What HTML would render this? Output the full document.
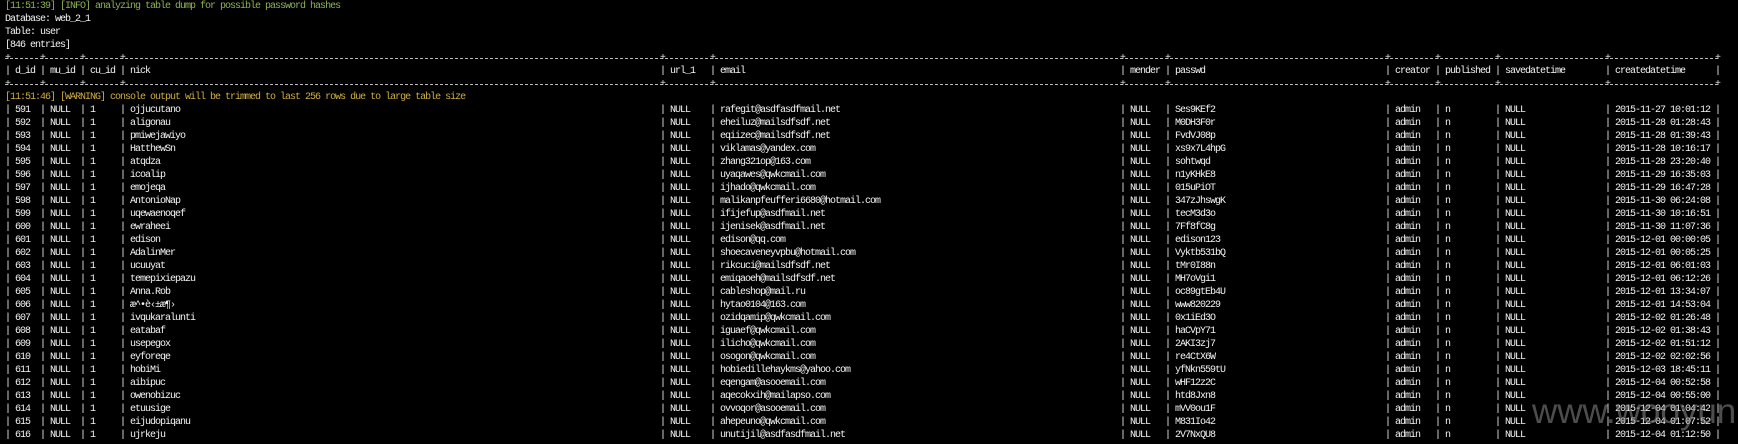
<!DOCTYPE html>
<html><head><meta charset="utf-8">
<style>
html,body{margin:0;padding:0;background:#000;}
body{width:1738px;height:444px;position:relative;overflow:hidden;font-family:"Liberation Mono","DejaVu Sans Mono",monospace;font-size:10px;letter-spacing:-1px;color:#f4f4f4;}
.l{position:absolute;left:0;height:13px;line-height:13px;width:1738px;white-space:pre;}
.l span{position:absolute;top:0;}
.g{color:#8cb352;}
.y{color:#cfae3e;}
.b{position:absolute;left:5px;width:1713px;top:6px;height:1px;background:repeating-linear-gradient(90deg,#bbb 0 3px,transparent 3px 5px);}
.p{position:absolute;top:0;color:#ddd;}
.a{left:5px}.b1{left:40px}.c{left:80px}.d{left:120px}.e{left:660px}.f{left:710px}.h{left:1120px}.i{left:1165px}.j{left:1385px}.k{left:1435px}.m{left:1495px}.n{left:1605px}.o{left:1715px}
.wm{position:absolute;left:1532px;top:392px;font-family:"Liberation Sans",sans-serif;font-size:35px;letter-spacing:0;color:rgba(140,140,140,0.55);white-space:nowrap;}
</style></head><body>
<div class="l g" style="top:0px"><span class="a">[11:51:39] [INFO] analyzing table dump for possible password hashes</span></div>
<div class="l" style="top:13px"><span class="a">Database: web_2_1</span></div>
<div class="l" style="top:26px"><span class="a">Table: user</span></div>
<div class="l" style="top:39px"><span class="a">[846 entries]</span></div>
<div class="l" style="top:52px"><div class="b"></div><span class="p a">+</span><span class="p b1">+</span><span class="p c">+</span><span class="p d">+</span><span class="p e">+</span><span class="p f">+</span><span class="p h">+</span><span class="p i">+</span><span class="p j">+</span><span class="p k">+</span><span class="p m">+</span><span class="p n">+</span><span class="p o">+</span></div>
<div class="l" style="top:65px"><span class="a">| d_id</span><span class="b1">| mu_id</span><span class="c">| cu_id</span><span class="d">| nick</span><span class="e">| url_1</span><span class="f">| email</span><span class="h">| mender</span><span class="i">| passwd</span><span class="j">| creator</span><span class="k">| published</span><span class="m">| savedatetime</span><span class="n">| createdatetime</span><span class="o">|</span></div>
<div class="l" style="top:78px"><div class="b"></div><span class="p a">+</span><span class="p b1">+</span><span class="p c">+</span><span class="p d">+</span><span class="p e">+</span><span class="p f">+</span><span class="p h">+</span><span class="p i">+</span><span class="p j">+</span><span class="p k">+</span><span class="p m">+</span><span class="p n">+</span><span class="p o">+</span></div>
<div class="l y" style="top:91px"><span class="a">[11:51:46] [WARNING] console output will be trimmed to last 256 rows due to large table size</span></div>

<div class="l" style="top:104px"><span class="a">| 591</span><span class="b1">| NULL</span><span class="c">| 1</span><span class="d">| ojjucutano</span><span class="e">| NULL</span><span class="f">| rafegit@asdfasdfmail.net</span><span class="h">| NULL</span><span class="i">| Ses9KEf2</span><span class="j">| admin</span><span class="k">| n</span><span class="m">| NULL</span><span class="n">| 2015-11-27 10:01:12</span><span class="o">|</span></div>
<div class="l" style="top:117px"><span class="a">| 592</span><span class="b1">| NULL</span><span class="c">| 1</span><span class="d">| aligonau</span><span class="e">| NULL</span><span class="f">| eheiluz@mailsdfsdf.net</span><span class="h">| NULL</span><span class="i">| M0DH3F0r</span><span class="j">| admin</span><span class="k">| n</span><span class="m">| NULL</span><span class="n">| 2015-11-28 01:28:43</span><span class="o">|</span></div>
<div class="l" style="top:130px"><span class="a">| 593</span><span class="b1">| NULL</span><span class="c">| 1</span><span class="d">| pmiwejawiyo</span><span class="e">| NULL</span><span class="f">| eqiizec@mailsdfsdf.net</span><span class="h">| NULL</span><span class="i">| FvdVJ08p</span><span class="j">| admin</span><span class="k">| n</span><span class="m">| NULL</span><span class="n">| 2015-11-28 01:39:43</span><span class="o">|</span></div>
<div class="l" style="top:143px"><span class="a">| 594</span><span class="b1">| NULL</span><span class="c">| 1</span><span class="d">| HatthewSn</span><span class="e">| NULL</span><span class="f">| viklamas@yandex.com</span><span class="h">| NULL</span><span class="i">| xs9x7L4hpG</span><span class="j">| admin</span><span class="k">| n</span><span class="m">| NULL</span><span class="n">| 2015-11-28 10:16:17</span><span class="o">|</span></div>
<div class="l" style="top:156px"><span class="a">| 595</span><span class="b1">| NULL</span><span class="c">| 1</span><span class="d">| atqdza</span><span class="e">| NULL</span><span class="f">| zhang321op@163.com</span><span class="h">| NULL</span><span class="i">| sohtwqd</span><span class="j">| admin</span><span class="k">| n</span><span class="m">| NULL</span><span class="n">| 2015-11-28 23:20:40</span><span class="o">|</span></div>
<div class="l" style="top:169px"><span class="a">| 596</span><span class="b1">| NULL</span><span class="c">| 1</span><span class="d">| icoalip</span><span class="e">| NULL</span><span class="f">| uyaqawes@qwkcmail.com</span><span class="h">| NULL</span><span class="i">| n1yKHkE8</span><span class="j">| admin</span><span class="k">| n</span><span class="m">| NULL</span><span class="n">| 2015-11-29 16:35:03</span><span class="o">|</span></div>
<div class="l" style="top:182px"><span class="a">| 597</span><span class="b1">| NULL</span><span class="c">| 1</span><span class="d">| emojeqa</span><span class="e">| NULL</span><span class="f">| ijhado@qwkcmail.com</span><span class="h">| NULL</span><span class="i">| 015uPiOT</span><span class="j">| admin</span><span class="k">| n</span><span class="m">| NULL</span><span class="n">| 2015-11-29 16:47:28</span><span class="o">|</span></div>
<div class="l" style="top:195px"><span class="a">| 598</span><span class="b1">| NULL</span><span class="c">| 1</span><span class="d">| AntonioNap</span><span class="e">| NULL</span><span class="f">| malikanpfeufferi6680@hotmail.com</span><span class="h">| NULL</span><span class="i">| 347zJhswgK</span><span class="j">| admin</span><span class="k">| n</span><span class="m">| NULL</span><span class="n">| 2015-11-30 06:24:08</span><span class="o">|</span></div>
<div class="l" style="top:208px"><span class="a">| 599</span><span class="b1">| NULL</span><span class="c">| 1</span><span class="d">| uqewaenoqef</span><span class="e">| NULL</span><span class="f">| ifijefup@asdfmail.net</span><span class="h">| NULL</span><span class="i">| tecM3d3o</span><span class="j">| admin</span><span class="k">| n</span><span class="m">| NULL</span><span class="n">| 2015-11-30 10:16:51</span><span class="o">|</span></div>
<div class="l" style="top:221px"><span class="a">| 600</span><span class="b1">| NULL</span><span class="c">| 1</span><span class="d">| ewraheei</span><span class="e">| NULL</span><span class="f">| ijenisek@asdfmail.net</span><span class="h">| NULL</span><span class="i">| 7Ff8fC8g</span><span class="j">| admin</span><span class="k">| n</span><span class="m">| NULL</span><span class="n">| 2015-11-30 11:07:36</span><span class="o">|</span></div>
<div class="l" style="top:234px"><span class="a">| 601</span><span class="b1">| NULL</span><span class="c">| 1</span><span class="d">| edison</span><span class="e">| NULL</span><span class="f">| edison@qq.com</span><span class="h">| NULL</span><span class="i">| edison123</span><span class="j">| admin</span><span class="k">| n</span><span class="m">| NULL</span><span class="n">| 2015-12-01 00:00:05</span><span class="o">|</span></div>
<div class="l" style="top:247px"><span class="a">| 602</span><span class="b1">| NULL</span><span class="c">| 1</span><span class="d">| AdalinMer</span><span class="e">| NULL</span><span class="f">| shoecaveneyvpbu@hotmail.com</span><span class="h">| NULL</span><span class="i">| Vyktb531bQ</span><span class="j">| admin</span><span class="k">| n</span><span class="m">| NULL</span><span class="n">| 2015-12-01 00:05:25</span><span class="o">|</span></div>
<div class="l" style="top:260px"><span class="a">| 603</span><span class="b1">| NULL</span><span class="c">| 1</span><span class="d">| ucuuyat</span><span class="e">| NULL</span><span class="f">| rikcuci@mailsdfsdf.net</span><span class="h">| NULL</span><span class="i">| tMr0I88n</span><span class="j">| admin</span><span class="k">| n</span><span class="m">| NULL</span><span class="n">| 2015-12-01 06:01:03</span><span class="o">|</span></div>
<div class="l" style="top:273px"><span class="a">| 604</span><span class="b1">| NULL</span><span class="c">| 1</span><span class="d">| temepixiepazu</span><span class="e">| NULL</span><span class="f">| emiqaoeh@mailsdfsdf.net</span><span class="h">| NULL</span><span class="i">| MH7oVgi1</span><span class="j">| admin</span><span class="k">| n</span><span class="m">| NULL</span><span class="n">| 2015-12-01 06:12:26</span><span class="o">|</span></div>
<div class="l" style="top:286px"><span class="a">| 605</span><span class="b1">| NULL</span><span class="c">| 1</span><span class="d">| Anna.Rob</span><span class="e">| NULL</span><span class="f">| cableshop@mail.ru</span><span class="h">| NULL</span><span class="i">| oc89gtEb4U</span><span class="j">| admin</span><span class="k">| n</span><span class="m">| NULL</span><span class="n">| 2015-12-01 13:34:07</span><span class="o">|</span></div>
<div class="l" style="top:299px"><span class="a">| 606</span><span class="b1">| NULL</span><span class="c">| 1</span><span class="d">| æ^•è‹±æ¶›</span><span class="e">| NULL</span><span class="f">| hytao0104@163.com</span><span class="h">| NULL</span><span class="i">| www820229</span><span class="j">| admin</span><span class="k">| n</span><span class="m">| NULL</span><span class="n">| 2015-12-01 14:53:04</span><span class="o">|</span></div>
<div class="l" style="top:312px"><span class="a">| 607</span><span class="b1">| NULL</span><span class="c">| 1</span><span class="d">| ivqukaralunti</span><span class="e">| NULL</span><span class="f">| ozidqamip@qwkcmail.com</span><span class="h">| NULL</span><span class="i">| 0x1iEd3O</span><span class="j">| admin</span><span class="k">| n</span><span class="m">| NULL</span><span class="n">| 2015-12-02 01:26:48</span><span class="o">|</span></div>
<div class="l" style="top:325px"><span class="a">| 608</span><span class="b1">| NULL</span><span class="c">| 1</span><span class="d">| eatabaf</span><span class="e">| NULL</span><span class="f">| iguaef@qwkcmail.com</span><span class="h">| NULL</span><span class="i">| haCVpY71</span><span class="j">| admin</span><span class="k">| n</span><span class="m">| NULL</span><span class="n">| 2015-12-02 01:38:43</span><span class="o">|</span></div>
<div class="l" style="top:338px"><span class="a">| 609</span><span class="b1">| NULL</span><span class="c">| 1</span><span class="d">| usepegox</span><span class="e">| NULL</span><span class="f">| ilicho@qwkcmail.com</span><span class="h">| NULL</span><span class="i">| 2AKI3zj7</span><span class="j">| admin</span><span class="k">| n</span><span class="m">| NULL</span><span class="n">| 2015-12-02 01:51:12</span><span class="o">|</span></div>
<div class="l" style="top:351px"><span class="a">| 610</span><span class="b1">| NULL</span><span class="c">| 1</span><span class="d">| eyforeqe</span><span class="e">| NULL</span><span class="f">| osogon@qwkcmail.com</span><span class="h">| NULL</span><span class="i">| re4CtX6W</span><span class="j">| admin</span><span class="k">| n</span><span class="m">| NULL</span><span class="n">| 2015-12-02 02:02:56</span><span class="o">|</span></div>
<div class="l" style="top:364px"><span class="a">| 611</span><span class="b1">| NULL</span><span class="c">| 1</span><span class="d">| hobiMi</span><span class="e">| NULL</span><span class="f">| hobiedillehaykms@yahoo.com</span><span class="h">| NULL</span><span class="i">| yfNkn559tU</span><span class="j">| admin</span><span class="k">| n</span><span class="m">| NULL</span><span class="n">| 2015-12-03 18:45:11</span><span class="o">|</span></div>
<div class="l" style="top:377px"><span class="a">| 612</span><span class="b1">| NULL</span><span class="c">| 1</span><span class="d">| aibipuc</span><span class="e">| NULL</span><span class="f">| eqengam@asooemail.com</span><span class="h">| NULL</span><span class="i">| wHF12z2C</span><span class="j">| admin</span><span class="k">| n</span><span class="m">| NULL</span><span class="n">| 2015-12-04 00:52:58</span><span class="o">|</span></div>
<div class="l" style="top:390px"><span class="a">| 613</span><span class="b1">| NULL</span><span class="c">| 1</span><span class="d">| owenobizuc</span><span class="e">| NULL</span><span class="f">| aqecokxih@mailapso.com</span><span class="h">| NULL</span><span class="i">| htd8Jxn8</span><span class="j">| admin</span><span class="k">| n</span><span class="m">| NULL</span><span class="n">| 2015-12-04 00:55:00</span><span class="o">|</span></div>
<div class="l" style="top:403px"><span class="a">| 614</span><span class="b1">| NULL</span><span class="c">| 1</span><span class="d">| etuusige</span><span class="e">| NULL</span><span class="f">| ovvoqor@asooemail.com</span><span class="h">| NULL</span><span class="i">| mVV0ou1F</span><span class="j">| admin</span><span class="k">| n</span><span class="m">| NULL</span><span class="n">| 2015-12-04 01:04:42</span><span class="o">|</span></div>
<div class="l" style="top:416px"><span class="a">| 615</span><span class="b1">| NULL</span><span class="c">| 1</span><span class="d">| eijudopiqanu</span><span class="e">| NULL</span><span class="f">| ahepeuno@qwkcmail.com</span><span class="h">| NULL</span><span class="i">| M831Io42</span><span class="j">| admin</span><span class="k">| n</span><span class="m">| NULL</span><span class="n">| 2015-12-04 01:07:52</span><span class="o">|</span></div>
<div class="l" style="top:429px"><span class="a">| 616</span><span class="b1">| NULL</span><span class="c">| 1</span><span class="d">| ujrkeju</span><span class="e">| NULL</span><span class="f">| unutijil@asdfasdfmail.net</span><span class="h">| NULL</span><span class="i">| 2V7NxQU8</span><span class="j">| admin</span><span class="k">| n</span><span class="m">| NULL</span><span class="n">| 2015-12-04 01:12:50</span><span class="o">|</span></div>
<div class="wm">www.wooyun.org</div>
</body></html>
